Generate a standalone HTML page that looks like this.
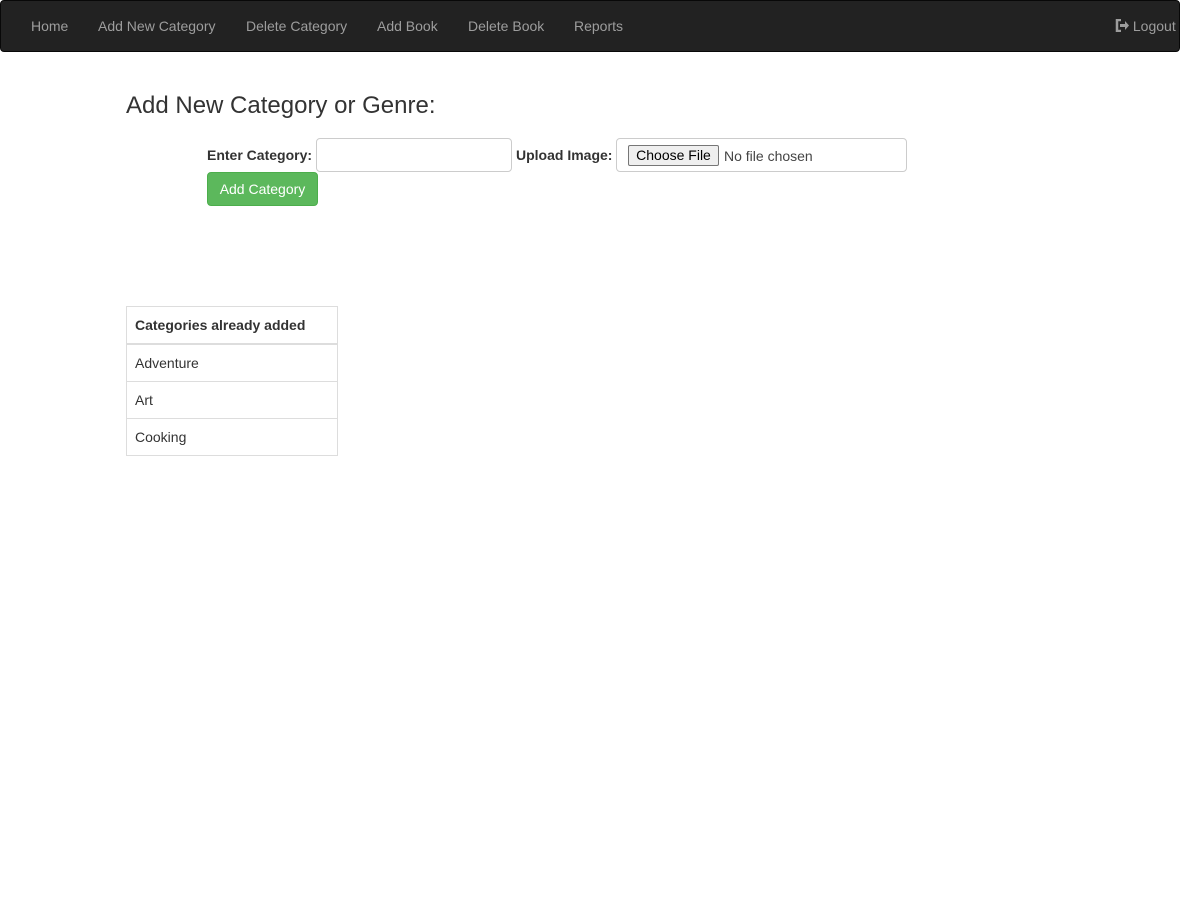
<!DOCTYPE html>
<html><head><style>
body{margin:0;font-family:"Liberation Sans",sans-serif;font-size:14px;color:#333;background:#fff;width:1180px;height:902px;overflow:hidden;position:relative}
.nav{position:absolute;left:0;top:0;width:1178px;height:50px;background:#222;border:1px solid #080808;border-radius:4px}
.nav a{position:absolute;top:17px;color:#9d9d9d;font-size:14px;text-decoration:none;white-space:nowrap}
h3{position:absolute;left:126px;top:92px;margin:0;font-size:24px;font-weight:normal;color:#333}
.lbl{position:absolute;font-weight:bold;font-size:14px}
.inp{position:absolute;border:1px solid #ccc;border-radius:4px;box-sizing:border-box;background:#fff}
.btn{position:absolute;left:207px;top:172px;width:111px;height:34px;background:#5cb85c;border:1px solid #4cae4c;border-radius:4px;box-sizing:border-box;color:#fff;font-size:14px;text-align:center;line-height:32px}
.cf{position:absolute;left:628px;top:145px;width:91px;height:21px;background:#efefef;border:1px solid #767676;border-radius:2px;box-sizing:border-box;font-size:14px;color:#000;text-align:center;line-height:19px}
table{position:absolute;left:126px;top:306px;width:212px;border-collapse:collapse}
td{border:1px solid #ddd;padding:0 8px;height:36px;font-size:14px}
th{border:1px solid #ddd;border-bottom:2px solid #ddd;padding:0 8px;height:36px;text-align:left;font-size:14px}
</style></head><body>
<div class="nav">
<a style="left:30px">Home</a>
<a style="left:97px">Add New Category</a>
<a style="left:245px">Delete Category</a>
<a style="left:376px">Add Book</a>
<a style="left:467px">Delete Book</a>
<a style="left:573px">Reports</a>
<a style="left:1114px"><svg width="14" height="13" viewBox="0 0 14 13" style="vertical-align:-1px"><path d="M6 1H2v11h4" fill="none" stroke="#9d9d9d" stroke-width="2.5"/><path d="M5 5h5V2l4 4.5-4 4.5V8H5z" fill="#9d9d9d"/></svg> Logout</a>
</div>
<h3>Add New Category or Genre:</h3>
<div class="lbl" style="left:207px;top:147px">Enter Category:</div>
<div class="inp" style="left:316px;top:138px;width:196px;height:34px"></div>
<div class="lbl" style="left:516px;top:147px">Upload Image:</div>
<div class="inp" style="left:616px;top:138px;width:291px;height:34px"></div>
<div class="cf">Choose File</div>
<div style="position:absolute;left:724px;top:148px;color:#444">No file chosen</div>
<div class="btn">Add Category</div>
<table>
<tr><th>Categories already added</th></tr>
<tr><td>Adventure</td></tr>
<tr><td>Art</td></tr>
<tr><td>Cooking</td></tr>
</table>
</body></html>
